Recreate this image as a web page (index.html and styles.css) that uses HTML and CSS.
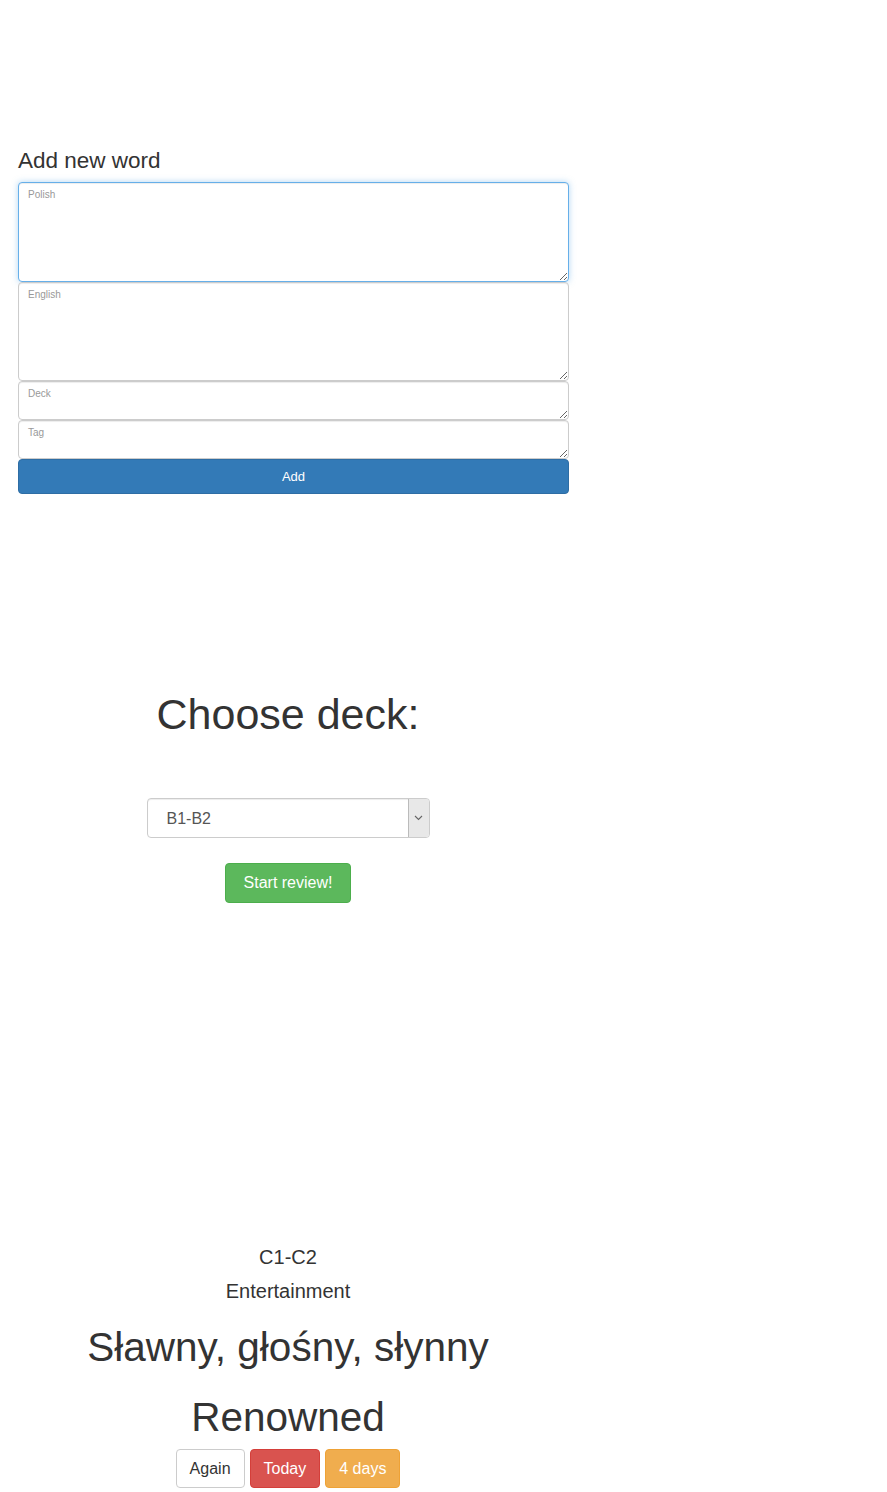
FILE: index.html
```html
<!DOCTYPE html>

<html>
    <head>
        <meta charset="utf-8">

        <link rel="stylesheet" href="styles.css">
    </head>

    <body>
        <form class="add">
            <h3 class="title">Add new word</h3>

            <textarea class="field field-big field-focus" name="polish" placeholder="Polish"></textarea>
            <textarea class="field field-english" name="english" placeholder="English"></textarea>
            <textarea class="field field-small" name="deck" placeholder="Deck"></textarea>
            <textarea class="field field-small" name="tag" placeholder="Tag"></textarea>

            <button type="button" class="btn btn-add">Add</button>
        </form>

        <div class="deck">
            <h1 class="deck-title">Choose deck:</h1>

            <div class="picker">
                <select class="picker-select" name="deck">
                    <option>B1-B2</option>
                    <option>C1-C2</option>
                </select>

                <span class="picker-arrow">
                    <svg width="9" height="6" viewBox="0 0 9 6">
                        <path d="M1 1 L4.5 4.5 L8 1" fill="none" stroke="#666" stroke-width="1.1"/>
                    </svg>
                </span>
            </div>

            <button type="button" class="btn btn-start">Start review!</button>
        </div>

        <div class="review">
            <div class="meta">C1-C2</div>
            <div class="meta">Entertainment</div>
            <div class="word word-first">Sławny, głośny, słynny</div>
            <div class="word">Renowned</div>

            <div class="answers">
                <button type="button" class="btn btn-answer btn-again">Again</button>
                <button type="button" class="btn btn-answer btn-today">Today</button>
                <button type="button" class="btn btn-answer btn-days">4 days</button>
            </div>
        </div>
    </body>
</html>
```

FILE: styles.css
```css
body
{
    margin: 0;
    color: #333;
    background: white;
    font-family: "Liberation Sans", Arial, sans-serif;
}

.add
{
    width: 551px;
    padding-top: 148px;
    margin-left: 18px;
}

.title
{
    margin: 0 0 8px 0;
    font-size: 22.5px;
    font-weight: normal;
    line-height: 26px;
}

.field
{
    display: block;
    width: 100%;
    box-sizing: border-box;
    margin: 0;
    padding: 6px 9px;
    border: 1px solid #ccc;
    border-radius: 4px;
    font-size: 10px;
    font-family: "Liberation Sans", Arial, sans-serif;
    color: #555;
    resize: vertical;
    box-shadow: inset 0 1px 1px rgba(0, 0, 0, 0.075);
}

.field::placeholder
{
    color: #999;
}

.field:focus
{
    outline: none;
}

.field-focus
{
    border-color: #66afe9;
    box-shadow: inset 0 1px 1px rgba(0, 0, 0, 0.075), 0 0 6px rgba(102, 175, 233, 0.5);
}

.field-big
{
    height: 100px;
}

.field-english
{
    height: 99px;
}

.field-small
{
    height: 39px;
}

.btn
{
    border: 1px solid transparent;
    border-radius: 4px;
    cursor: pointer;
    font-family: "Liberation Sans", Arial, sans-serif;
}

.btn-add
{
    display: block;
    width: 100%;
    height: 35px;
    color: white;
    font-size: 13px;
    background-color: #337ab7;
    border-color: #2e6da4;
}

.deck
{
    width: 576px;
    text-align: center;
}

.deck-title
{
    margin: 197px 0 60px 0;
    font-size: 43px;
    font-weight: normal;
    line-height: 47px;
}

.picker
{
    display: flex;
    width: 283px;
    height: 40px;
    box-sizing: border-box;
    margin: 0 auto;
    border: 1px solid #ccc;
    border-radius: 4px;
    overflow: hidden;
    box-shadow: inset 0 1px 1px rgba(0, 0, 0, 0.075);
}

.picker-select
{
    flex: 1;
    padding: 0 0 0 19px;
    border: none;
    outline: none;
    appearance: none;
    background: transparent;
    font-size: 16px;
    color: #555;
    font-family: "Liberation Sans", Arial, sans-serif;
}

.picker-arrow
{
    display: flex;
    align-items: center;
    justify-content: center;
    width: 20px;
    margin: 0;
    border-left: 1px solid #bbb;
    background: #e8e8e8;
}

.btn-start
{
    margin-top: 25px;
    height: 40px;
    padding: 0 18px;
    font-size: 16px;
    color: white;
    background-color: #5cb85c;
    border-color: #4cae4c;
}

.review
{
    width: 576px;
    margin-top: 337px;
    text-align: center;
}

.meta
{
    font-size: 20px;
    line-height: 34px;
}

.word
{
    font-size: 40.5px;
    line-height: 70px;
}

.word-first
{
    margin-top: 4px;
}

.answers
{
    display: flex;
    justify-content: center;
    gap: 5px;
    margin-top: -3px;
}

.btn-answer
{
    height: 39px;
    padding: 0 13px;
    font-size: 16px;
}

.btn-again
{
    color: #333;
    background-color: white;
    border-color: #ccc;
}

.btn-today
{
    color: white;
    background-color: #d9534f;
    border-color: #d43f3a;
}

.btn-days
{
    color: white;
    background-color: #f0ad4e;
    border-color: #eea236;
}
```
